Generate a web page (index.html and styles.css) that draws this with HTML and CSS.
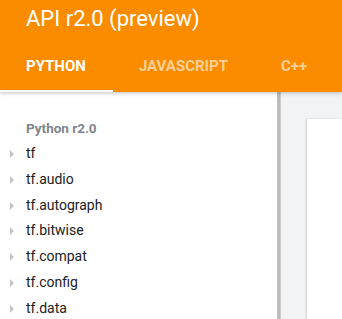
FILE: index.html
```html
<!DOCTYPE html>
<html>
<head>
    <title>API r2.0 (preview)</title>
    <link rel="stylesheet" href="styles.css">
</head>
<body>
    <header class="header">
        <h1 class="title">API r2.0 (preview)</h1>
        <nav class="tabs">
            <a class="tab active">Python</a>
            <a class="tab">JavaScript</a>
            <a class="tab">C++</a>
        </nav>
    </header>

    <div class="main">
        <aside class="sidebar">
            <div class="heading">Python r2.0</div>
            <ul class="tree">
                <li class="node">tf</li>
                <li class="node">tf.audio</li>
                <li class="node">tf.autograph</li>
                <li class="node">tf.bitwise</li>
                <li class="node">tf.compat</li>
                <li class="node">tf.config</li>
                <li class="node">tf.data</li>
            </ul>
        </aside>
        <div class="divider"></div>
        <section class="content">
            <div class="card"></div>
        </section>
    </div>
</body>
</html>
```

FILE: styles.css
```css
* {
    box-sizing: border-box;
}

body {
    margin: 0;
    height: 100vh;
    overflow: hidden;
    font-family: Roboto, "Noto Sans", sans-serif;
    display: flex;
    flex-direction: column;
}

.header {
    background-color: #FB8C00;
    color: #fff;
    position: relative;
    z-index: 1;
    box-shadow: 0 1px 4px rgba(0, 0, 0, 0.25);
}

.title {
    margin: 0;
    padding: 0 26px;
    height: 44px;
    font-size: 22px;
    font-weight: 400;
    line-height: 38px;
}

.tabs {
    display: flex;
    height: 48px;
}

.tab {
    display: flex;
    align-items: center;
    padding: 0 27px 3px 26px;
    font-size: 15px;
    font-weight: 700;
    text-transform: uppercase;
    color: rgba(255, 255, 255, 0.6);
    border-bottom: 2px solid transparent;
}

.tab.active {
    color: #fff;
    border-bottom-color: #fff;
}

.main {
    flex: 1;
    display: flex;
    min-height: 0;
}

.sidebar {
    width: 277px;
    background: #fff;
    padding: 27px 0 0;
}

.heading {
    padding-left: 26px;
    font-size: 13.5px;
    font-weight: 700;
    color: #80868b;
    line-height: 18px;
    margin-bottom: 4px;
}

.tree {
    list-style: none;
    margin: 0;
    padding: 0;
}

.node {
    position: relative;
    padding-left: 26px;
    height: 25.8px;
    line-height: 25px;
    font-size: 14px;
    color: #202124;
}

.node::before {
    content: "";
    position: absolute;
    left: 10px;
    top: 9px;
    border-left: 4px solid #c4c4c4;
    border-top: 4px solid transparent;
    border-bottom: 4px solid transparent;
}

.divider {
    width: 4px;
    background: linear-gradient(90deg, #c2c2c2, #b8b8b8 60%, #d4d4d4);
}

.content {
    flex: 1;
    background: #f1f3f4;
    padding: 27px 0 0 26px;
}

.card {
    height: 100%;
    background: #fff;
    box-shadow: -1px 0 2px rgba(0, 0, 0, 0.15);
}
```
